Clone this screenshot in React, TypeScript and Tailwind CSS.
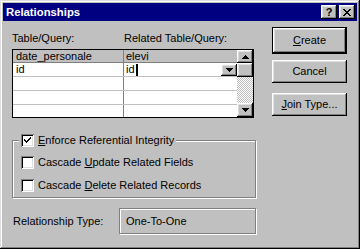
import React from 'react';

const raised =
  'bg-[#c0c0c0] shadow-[inset_-1px_-1px_#000,inset_1px_1px_#fff,inset_-2px_-2px_#808080,inset_2px_2px_#dfdfdf]';
const etched = 'border border-[#808080] shadow-[inset_1px_1px_#fff,1px_1px_#fff]';

const Checkbox: React.FC<{ checked?: boolean }> = ({ checked }) => (
  <div className="w-[13px] h-[13px] bg-white shrink-0 flex items-center justify-center shadow-[inset_1px_1px_#808080,inset_-1px_-1px_#fff,inset_2px_2px_#000,inset_-2px_-2px_#dfdfdf]">
    {checked && (
      <svg width="7" height="7" viewBox="0 0 7 7">
        <path d="M0 2h1v1h1v1h1V3h1V2h1V1h1V0h1v2H6v1H5v1H4v1H3v1H2V5H1V4H0z" fill="#000" />
      </svg>
    )}
  </div>
);

const Arrow: React.FC<{ up?: boolean }> = ({ up }) => (
  <svg width="7" height="4" viewBox="0 0 7 4">
    <path d={up ? 'M3 0h1v1h1v1h1v1h1v1H0V3h1V2h1V1h1z' : 'M0 0h7v1H6v1H5v1H4v1H3V3H2V2H1V1H0z'} fill="#000" />
  </svg>
);

const Button: React.FC<{ children: React.ReactNode; primary?: boolean }> = ({ children, primary }) =>
  primary ? (
    <div className="border border-black h-[27px] flex">
      <div className={`${raised} flex-1 flex items-center justify-center`}>{children}</div>
    </div>
  ) : (
    <div className={`${raised} h-[23px] flex items-center justify-center`}>{children}</div>
  );

export default function App() {
  return (
    <div
      className="w-[360px] h-[249px] bg-[#c0c0c0] p-[3px] flex flex-col text-[11px] leading-[13px] text-black shadow-[inset_-1px_-1px_#000,inset_1px_1px_#dfdfdf,inset_-2px_-2px_#808080,inset_2px_2px_#fff]"
      style={{ fontFamily: '"Liberation Sans", Arial, sans-serif' }}
    >
      {/* title bar */}
      <div className="h-[18px] bg-[#000080] flex items-center pl-[3px] pr-[2px] shrink-0">
        <span className="text-white font-bold text-[11.3px] flex-1">Relationships</span>
        <div className={`${raised} w-[16px] h-[14px] flex items-center justify-center font-bold text-[11px] leading-none`}>?</div>
        <div className={`${raised} w-[16px] h-[14px] ml-[2px] flex items-center justify-center`}>
          <svg width="8" height="7" viewBox="0 0 8 7">
            <path d="M0 0h2v1h1v1h2V1h1V0h2v1H7v1H6v1H5v1h1v1h1v1h1v1H6V6H5V5H3v1H2v1H0V6h1V5h1V4h1V3H2V2H1V1H0z" fill="#000" />
          </svg>
        </div>
      </div>

      <div className="flex flex-1">
        {/* left column */}
        <div className="ml-[9px] w-[244px] flex flex-col">
          <div className="flex mt-[11px] h-[13px]">
            <span className="w-[112px]">Table/Query:</span>
            <span>Related Table/Query:</span>
          </div>

          {/* grid */}
          <div className="mt-[4px] w-[242px] h-[69px] border border-black flex bg-white">
            <div className="flex-1 flex flex-col">
              <div className="h-[13px] flex bg-[#c0c0c0] border-b border-[#808080]">
                <div className="w-[111px] pl-[3px] border-r border-[#808080] leading-[12px]">date_personale</div>
                <div className="flex-1 pl-[2px] leading-[12px]">elevi</div>
              </div>
              <div className="h-[14px] flex border-b border-[#c0c0c0]">
                <div className="w-[111px] pl-[3px] border-r border-[#808080] leading-[13px]">id</div>
                <div className="flex-1 pl-[2px] flex items-center">
                  <span className="leading-[13px]">id</span>
                  <div className="w-[2px] h-[12px] bg-black ml-[1px]" />
                  <div className={`${raised} ml-auto w-[16px] h-[12px] flex items-center justify-center`}>
                    <Arrow />
                  </div>
                </div>
              </div>
              {[0, 1, 2].map((i) => (
                <div key={i} className={`flex ${i < 2 ? 'h-[14px] border-b border-[#c0c0c0]' : 'flex-1'}`}>
                  <div className="w-[111px] border-r border-[#808080]" />
                  <div className="flex-1" />
                </div>
              ))}
            </div>
            {/* scrollbar */}
            <div className="w-[16px] flex flex-col">
              <div className={`${raised} h-[13px] flex items-center justify-center`}>
                <Arrow up />
              </div>
              <div className={`${raised} h-[14px]`} />
              <div className="flex-1 bg-[image:repeating-conic-gradient(#fff_0_25%,#c0c0c0_0_50%)] bg-[length:2px_2px]" />
              <div className={`${raised} h-[14px] flex items-center justify-center`}>
                <Arrow />
              </div>
            </div>
          </div>

          {/* options group */}
          <div className={`${etched} relative mt-[22px] h-[58px] flex flex-col pl-[8px] pt-[15px] gap-[10px]`}>
            <div className="absolute top-[-7px] left-[6px] px-[2px] bg-[#c0c0c0] flex items-center gap-[4px]">
              <Checkbox checked />
              <span>
                <u>E</u>nforce Referential Integrity
              </span>
            </div>
            <div className="flex items-center gap-[4px]">
              <Checkbox />
              <span>
                Cascade <u>U</u>pdate Related Fields
              </span>
            </div>
            <div className="flex items-center gap-[4px]">
              <Checkbox />
              <span>
                Cascade <u>D</u>elete Related Records
              </span>
            </div>
          </div>

          <div className="flex items-center mt-[10px]">
            <span className="w-[107px] pl-[1px]">Relationship Type:</span>
            <div className={`${etched} h-[26px] flex-1 flex items-center pl-[6px]`}>One-To-One</div>
          </div>
        </div>

        {/* right column */}
        <div className="ml-[16px] w-[75px] flex flex-col mt-[6px]">
          <Button primary>
            <span>
              <u>C</u>reate
            </span>
          </Button>
          <div className="mt-[6px]">
            <Button>Cancel</Button>
          </div>
          <div className="mt-[10px]">
            <Button>
              <span>
                <u>J</u>oin Type...
              </span>
            </Button>
          </div>
        </div>
      </div>
    </div>
  );
}
